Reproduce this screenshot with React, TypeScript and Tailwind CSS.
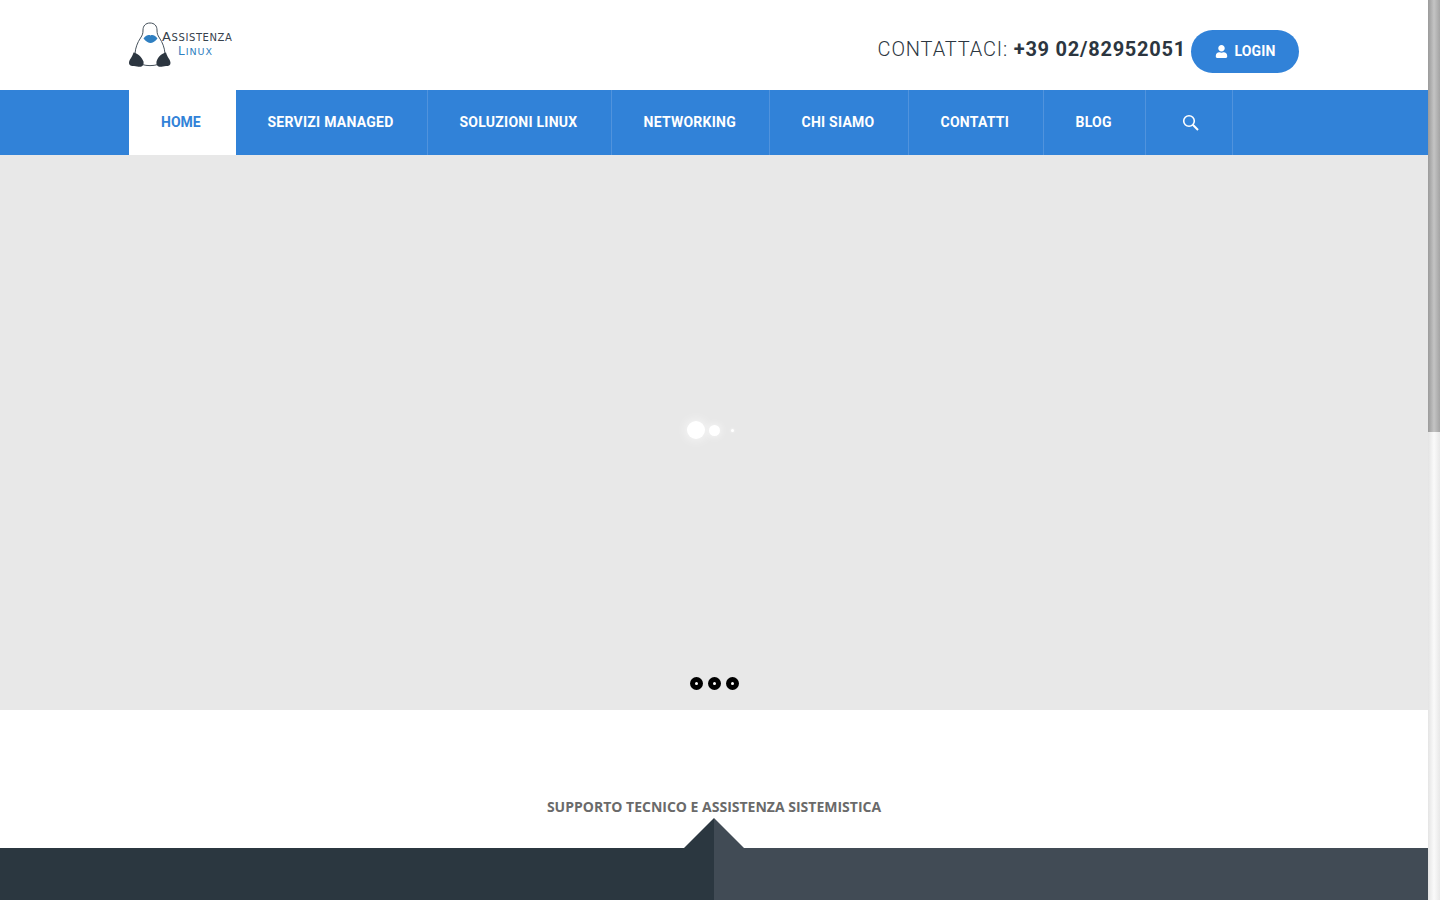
import { FaUser } from "react-icons/fa";

const navItems = [
  { label: "SERVIZI MANAGED", width: "w-[192px]" },
  { label: "SOLUZIONI LINUX", width: "w-[184px]" },
  { label: "NETWORKING", width: "w-[158px]" },
  { label: "CHI SIAMO", width: "w-[139px]" },
  { label: "CONTATTI", width: "w-[135px]" },
  { label: "BLOG", width: "w-[102px]" },
];

const PenguinLogo = () => (
  <svg width="42" height="46" viewBox="0 0 42 46" className="shrink-0">
    <path
      d="M21 1c-4.500 0-7 3-7 7 0 3.500-.5 5-2.500 8C8.500 20.500 6.500 25.500 6 31.500M21 1c4.500 0 7 3 7 7 0 3.500.5 5 2.500 8 3 4.500 5 9.500 5.500 15.500M13 42.500c5 1.500 11 1.500 16 0"
      fill="none"
      stroke="#46525c"
      strokeWidth="1"
    />
    <path d="M14.500 16.500c3-3.500 5-4 7-3 2-1 4-.5 7 3-3 3.500-5 4.500-7 4.500s-4-1-7-4.500z" fill="#2f7fc1" />
    <path d="M4.500 30.500c3.500.5 8 4 10 9 .5 2.500-.5 4.500-2 5-2.500 1-4.500-.5-7.500-.5-2.500 0-5-.5-5-3 0-3.500 3.500-6 4.500-10.500z" fill="#2c3640" />
    <path d="M37 30.500c-3.500.5-8 4-9.500 9-.5 2.500.5 4.500 2 5 2.500 1 4.500-.5 7.500-.5 2.500 0 4.500-.5 4.500-3 0-3.500-3.500-6-4.500-10.500z" fill="#2c3640" />
  </svg>
);

const Header = () => (
  <header className="h-[90px] bg-white">
    <div className="mx-auto flex h-full max-w-[1170px] items-start justify-between">
      <div className="mt-[22px] flex items-start">
        <PenguinLogo />
        <div className="-ml-[9px] mt-[8px] font-['DejaVu_Sans',sans-serif] leading-none">
          <div className="text-[10px] leading-[14px] tracking-[0.6px] text-[#37424c]">
            <span className="text-[13px]">A</span>SSISTENZA
          </div>
          <div className="-mt-[1px] ml-[16px] text-[9.5px] leading-[14px] tracking-[1px] text-[#2f7fc1]">
            <span className="text-[12px]">L</span>INUX
          </div>
        </div>
      </div>
      <div className="mt-[30px] flex items-start font-['Roboto',sans-serif]">
        <p className="mt-[5px] text-[20px] font-light leading-[28px] tracking-[0.85px] text-[#2c3640]">
          CONTATTACI: <strong className="font-bold tracking-[0.75px]">+39 02/82952051</strong>
        </p>
        <button className="ml-[5px] flex h-[43px] w-[108px] items-center justify-center gap-[7px] rounded-full bg-[#3182d8] text-[14px] font-bold tracking-[0.1px] text-white">
          <FaUser size={13} />
          LOGIN
        </button>
      </div>
    </div>
  </header>
);

const Nav = () => (
  <nav className="h-[65px] bg-[#3182d8] font-['Roboto',sans-serif] text-[14px] font-bold tracking-[0.25px] text-white">
    <ul className="mx-auto flex h-full max-w-[1170px]">
      <li className="flex w-[107px] items-center bg-white pl-[32px] tracking-normal text-[#3182d8]">HOME</li>
      {navItems.map((item) => (
        <li
          key={item.label}
          className={`flex items-center border-r border-[#5093dd] pl-[31.5px] ${item.width}`}
        >
          {item.label}
        </li>
      ))}
      <li className="flex w-[87px] items-center justify-center border-r border-[#5093dd] pl-[2px]">
        <svg width="17" height="17" viewBox="0 0 17 17" fill="none" stroke="currentColor" strokeWidth="1.6">
          <circle cx="7" cy="7" r="5.300" />
          <path d="M10.800 10.800 L16 16" strokeWidth="2" />
        </svg>
      </li>
    </ul>
  </nav>
);

const Hero = () => (
  <section className="relative flex h-[555px] items-start justify-center bg-[#e8e8e8] pt-[266px]">
    <div className="flex h-[18px] items-center">
      <span className="flex w-[18px] justify-center">
        <span className="h-[18px] w-[18px] rounded-full bg-white shadow-[0_0_12px_rgba(255,255,255,0.9)]" />
      </span>
      <span className="flex w-[18px] justify-center">
        <span className="h-[11px] w-[11px] rounded-full bg-white shadow-[0_0_8px_rgba(255,255,255,0.9)]" />
      </span>
      <span className="flex w-[18px] justify-center">
        <span className="h-[3px] w-[3px] rounded-full bg-white shadow-[0_0_3px_rgba(255,255,255,0.9)]" />
      </span>
    </div>
    <div className="absolute bottom-[20px] left-0 right-0 flex justify-center gap-[5px]">
      {[0, 1, 2].map((i) => (
        <span key={i} className="flex h-[13px] w-[13px] items-center justify-center rounded-full bg-black">
          <span className="h-[3px] w-[3px] rounded-full bg-white" />
        </span>
      ))}
    </div>
  </section>
);

const Intro = () => (
  <section className="bg-white pt-[87px]">
    <h2 className="h-[20px] text-center font-['Open_Sans',sans-serif] text-[14px] font-bold leading-[20px] text-[#6a6a6a]">
      SUPPORTO TECNICO E ASSISTENZA SISTEMISTICA
    </h2>
    <div className="mt-[1px] flex justify-center">
      <div className="h-0 w-0 border-b-[30px] border-l-[30px] border-b-[#2b3740] border-l-transparent" />
      <div className="h-0 w-0 border-b-[30px] border-r-[30px] border-b-[#414b55] border-r-transparent" />
    </div>
  </section>
);

const Scrollbar = () => (
  <aside className="w-[12px] shrink-0 bg-gradient-to-r from-[#e4e4e4] via-[#fafafa] to-[#e8e8e8]">
    <div className="h-[432px] bg-gradient-to-r from-[#9a9a9a] via-[#c4c4c4] to-[#a4a4a4]" />
  </aside>
);

export default function App() {
  return (
    <div className="flex h-screen overflow-hidden bg-white">
      <main className="min-w-0 flex-1">
        <Header />
        <Nav />
        <Hero />
        <Intro />
        <div className="grid h-[52px] grid-cols-2">
          <div className="bg-[#2b3740]" />
          <div className="bg-[#414b55]" />
        </div>
      </main>
      <Scrollbar />
    </div>
  );
}
